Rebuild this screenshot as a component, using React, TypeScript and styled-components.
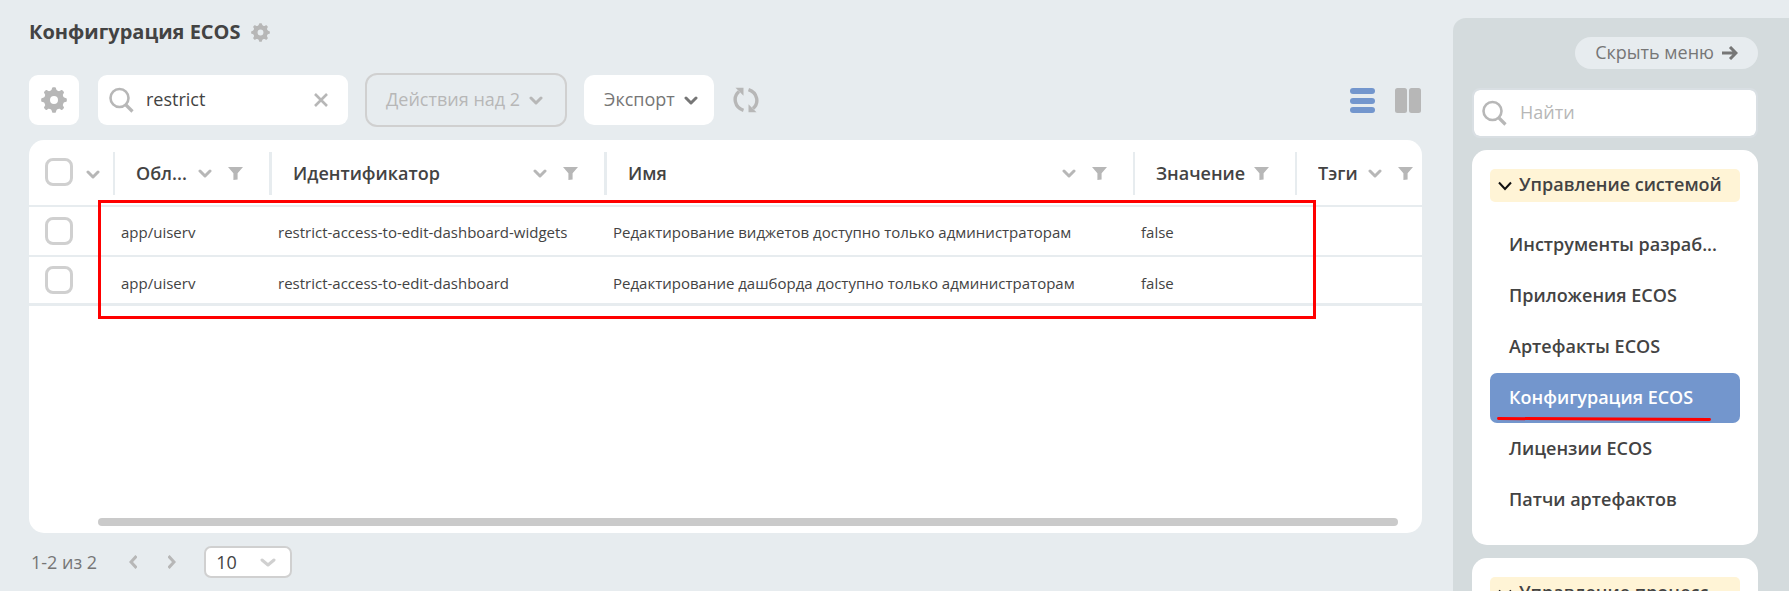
import React, { useState } from 'react';
import styled, { createGlobalStyle, css } from 'styled-components';

const color = {
  page: '#e7ecef',
  side: '#d4dbdd',
  text: '#434343',
  muted: '#767676',
  icon: '#b7b7b7',
  border: '#d0d0d0',
  accent: '#7396cd',
  group: '#fff4d6',
  mark: '#ff0000',
};

const GlobalStyle = createGlobalStyle`
  *, *::before, *::after { box-sizing: border-box; }
  body {
    margin: 0;
    background: ${color.page};
    color: ${color.text};
    font-family: 'Open Sans', 'Noto Sans', sans-serif;
    font-size: 18px;
    line-height: 24px;
  }
  button, input, select { font: inherit; color: inherit; }
  button { padding: 0; border: 0; background: none; cursor: pointer; }
  svg { display: block; flex: none; }
`;

const Page = styled.div`
  display: flex;
  height: 100vh;
  overflow: hidden;
`;

const Main = styled.main`
  display: flex;
  flex: 1;
  flex-direction: column;
  min-width: 0;
  padding: 18px 31px 13px 29px;
`;

const TitleRow = styled.header`
  display: flex;
  align-items: center;
  gap: 10px;
  height: 28px;
  margin-bottom: 27px;
`;

const Title = styled.h1`
  margin: 0;
  font-size: 20px;
  font-weight: 700;
  line-height: 28px;
`;

const Toolbar = styled.div`
  display: flex;
  align-items: center;
  gap: 17px;
  height: 54px;
  margin-bottom: 13px;
`;

const IconButton = styled.button<{ $tone?: string }>`
  display: flex;
  align-items: center;
  justify-content: center;
  color: ${(p) => p.$tone ?? color.icon};
`;

const SquareButton = styled(IconButton)`
  width: 50px;
  height: 50px;
  margin-right: 2px;
  border-radius: 9px;
  background: #fff;
`;

const SearchBox = styled.label<{ $side?: boolean }>`
  display: flex;
  align-items: center;
  height: 50px;
  color: ${color.icon};
  background: #fff;
  ${(p) =>
    p.$side
      ? css`
          gap: 13px;
          margin: 19px 0 12px;
          padding: 0 8px;
          border: 2px solid #d9dfe3;
          border-radius: 8px;
          background-clip: padding-box;
        `
      : css`
          gap: 12px;
          width: 250px;
          padding: 0 20px 0 11px;
          border-radius: 9px;
        `}
`;

const SearchInput = styled.input`
  flex: 1;
  min-width: 0;
  height: 28px;
  padding: 0 0 2px;
  border: 0;
  outline: 0;
  background: none;
  color: ${color.text};
  &::placeholder { color: ${color.icon}; opacity: 1; }
`;

const MenuButton = styled.button<{ $outlined?: boolean }>`
  display: flex;
  align-items: center;
  gap: 9px;
  height: 50px;
  padding: 0 16px 0 20px;
  border-radius: 10px;
  background: #fff;
  color: ${color.muted};
  white-space: nowrap;
  ${(p) =>
    p.$outlined &&
    css`
      height: 54px;
      padding: 0 22px 0 19px;
      border: 2px solid ${color.border};
      border-radius: 12px;
      background: none;
      color: ${color.icon};
    `}
`;

const MenuButtonLabel = styled.span`
  padding-bottom: 2px;
`;

const RefreshButton = styled(IconButton)`
  margin-left: 2px;
`;

const Views = styled.div`
  display: flex;
  gap: 20px;
  margin: 0 1px 0 auto;
`;

const Card = styled.section`
  position: relative;
  display: flex;
  flex: 1;
  flex-direction: column;
  min-height: 0;
  overflow: hidden;
  border-radius: 15px;
  background: #fff;
`;

const Grid = styled.table`
  width: 100%;
  table-layout: fixed;
  border-collapse: separate;
  border-spacing: 0;
`;

const Col = styled.col<{ $w?: number }>`
  width: ${(p) => (p.$w ? `${p.$w}px` : 'auto')};
`;

const HeadCell = styled.th`
  height: 67px;
  padding: 2px 0 0;
  border-bottom: 2px solid ${color.page};
  text-align: left;
  font-weight: 600;
`;

const HeadBox = styled.div<{ $line: number; $select?: boolean }>`
  display: flex;
  align-items: center;
  height: 43px;
  padding: 0 ${(p) => (p.$line ? 26 : 9)}px 0 21px;
  border-right: ${(p) => p.$line}px solid ${color.page};
  ${(p) =>
    p.$select &&
    css`
      gap: 13px;
      padding: 0 13px 4px 16px;
      color: ${color.icon};
    `}
`;

const HeadLabel = styled.span`
  flex: 1;
  overflow: hidden;
  padding-bottom: 2px;
  white-space: nowrap;
`;

const HeadTools = styled.span`
  display: flex;
  align-items: center;
  gap: 16px;
`;

const Cell = styled.td<{ $last?: boolean }>`
  height: ${(p) => (p.$last ? 49 : 50)}px;
  padding: ${(p) => (p.$last ? 6 : 2)}px 6px 0;
  border-bottom: ${(p) => (p.$last ? 3 : 2)}px solid ${color.page};
  font-size: 15px;
  line-height: 20px;
  white-space: nowrap;
`;

const SelectCell = styled(Cell)`
  padding: 0 16px;
`;

const Check = styled.input.attrs({ type: 'checkbox' })`
  display: block;
  flex: none;
  width: 28px;
  height: 28px;
  margin: 0;
  appearance: none;
  border: 3px solid ${color.border};
  border-radius: 8px;
  background: #fff;
  &:checked { background: ${color.accent}; }
`;

const SelectChevron = styled.span`
  padding-top: 6px;
`;

const ScrollTrack = styled.div`
  margin: auto 24px 7px 69px;
`;

const ScrollThumb = styled.div`
  height: 8px;
  border-radius: 4px;
  background: #cacaca;
`;

const MarkFrame = styled.div`
  position: absolute;
  top: 60px;
  right: 106px;
  left: 69px;
  height: 119px;
  border: 3px solid ${color.mark};
  pointer-events: none;
`;

const Pager = styled.footer`
  display: flex;
  align-items: center;
  height: 32px;
  margin-top: 13px;
  padding-left: 2px;
  color: ${color.muted};
`;

const PagerArrows = styled.div`
  display: flex;
  gap: 31px;
  margin: 0 28px 0 32px;
`;

const SizePicker = styled.label`
  position: relative;
  display: block;
  color: ${color.border};
  svg {
    position: absolute;
    top: 12px;
    right: 16px;
    pointer-events: none;
  }
`;

const SizeSelect = styled.select`
  display: block;
  width: 88px;
  height: 32px;
  padding: 0 10px;
  appearance: none;
  border: 2px solid ${color.border};
  border-radius: 7px;
  background: #fff;
  color: ${color.text};
`;

const Side = styled.aside`
  flex: none;
  width: 336px;
  margin-top: 18px;
  padding: 19px 31px 0 19px;
  border-radius: 13px 0 0 0;
  background: ${color.side};
`;

const HideButton = styled.button`
  display: flex;
  align-items: center;
  gap: 8px;
  height: 32px;
  margin-left: auto;
  padding: 0 20px;
  border-radius: 16px;
  background: ${color.page};
  color: ${color.muted};
`;

const Group = styled.nav`
  margin-bottom: 13px;
  padding: 19px 18px 20px;
  border-radius: 15px;
  background: #fff;
`;

const GroupHead = styled.button`
  display: flex;
  align-items: center;
  gap: 7px;
  width: 100%;
  height: 33px;
  padding: 0 8px;
  border-radius: 5px;
  background: ${color.group};
  font-weight: 600;
  text-align: left;
`;

const GroupLabel = styled.span`
  flex: 1;
  overflow: hidden;
  padding-bottom: 4px;
  white-space: nowrap;
`;

const GroupList = styled.ul`
  display: grid;
  gap: 1px;
  margin: 18px 0 0;
  padding: 0;
  list-style: none;
`;

const GroupLink = styled.a<{ $active?: boolean }>`
  position: relative;
  display: block;
  height: 50px;
  padding: 0 19px;
  overflow: hidden;
  border-radius: 7px;
  background: ${(p) => (p.$active ? color.accent : 'none')};
  color: ${(p) => (p.$active ? '#fff' : color.text)};
  font-weight: 600;
  line-height: 48px;
  text-decoration: none;
  white-space: nowrap;
`;

const Underline = styled.svg`
  position: absolute;
  bottom: 0;
  left: 7px;
`;

const Chevron = ({ width = 14, height = 9, stroke = 3 }) => (
  <svg width={width} height={height} viewBox={`0 0 ${width} ${height}`} fill="none" stroke="currentColor" strokeWidth={stroke} strokeLinecap="round" strokeLinejoin="round">
    <path d={`M2 2 L${width / 2} ${height - 2} L${width - 2} 2`} />
  </svg>
);

const SideChevron = () => (
  <svg width="14" height="10" viewBox="0 0 14 10" fill="none" stroke="#111" strokeWidth="2">
    <path d="M1 1.5 L7 8 L13 1.5" />
  </svg>
);

const PageArrow = ({ back = false }) => (
  <svg width="8" height="14" viewBox="0 0 8 14" fill="none" stroke="currentColor" strokeWidth="3">
    <path d={back ? 'M7.5 1 L2 7 L7.5 13' : 'M0.5 1 L6 7 L0.5 13'} />
  </svg>
);

const Gear = ({ size = 26 }) => (
  <svg width={size} height={size} viewBox="0 0 26 26">
    <circle cx="13" cy="13" r="7" fill="none" stroke="currentColor" strokeWidth="6" />
    {[0, 45, 90, 135, 180, 225, 270, 315].map((angle) => (
      <path key={angle} d="M8.6 5 Q10.8 3.8 11.2 0.8 Q11.4 0.2 12 0.2 H14 Q14.6 0.2 14.8 0.8 Q15.2 3.8 17.4 5 Z" fill="currentColor" transform={`rotate(${angle} 13 13)`} />
    ))}
  </svg>
);

const Magnifier = () => (
  <svg width="25" height="26" viewBox="0 0 25 26" fill="none" stroke="currentColor">
    <circle cx="10.5" cy="11" r="9" strokeWidth="2.6" />
    <path d="M17 18 L23.5 24.5" strokeWidth="3.2" />
  </svg>
);

const Cross = () => (
  <svg width="14" height="14" viewBox="0 0 14 14" fill="none" stroke="currentColor" strokeWidth="2.6">
    <path d="M1 1 L13 13 M13 1 L1 13" />
  </svg>
);

const Funnel = () => (
  <svg width="15" height="13" viewBox="0 0 15 13" fill="currentColor">
    <path d="M0 0 H15 L9.6 6.2 V12.4 L5.4 13 V6.2 Z" />
  </svg>
);

const Refresh = () => (
  <svg width="26" height="26" viewBox="0 0 26 26">
    <g fill="none" stroke="currentColor" strokeWidth="3.4">
      <path d="M10.5 23.4 C1.5 20.5 -0.5 10 6 4.5" />
      <path d="M15.5 2.6 C24.5 5.5 26.5 16 20 21.5" />
    </g>
    <path d="M2.5 0.8 H10.5 V8.8 Z M23.5 25.2 H15.5 V17.2 Z" fill="currentColor" />
  </svg>
);

const ListIcon = () => (
  <svg width="25" height="25" viewBox="0 0 25 25" fill="currentColor">
    <rect width="25" height="6" rx="3" />
    <rect y="10" width="25" height="6" rx="3" />
    <rect y="19" width="25" height="6" rx="3" />
  </svg>
);

const ColumnsIcon = () => (
  <svg width="26" height="25" viewBox="0 0 26 25" fill="currentColor">
    <rect width="12" height="25" rx="2.5" />
    <rect x="14" width="12" height="25" rx="2.5" />
  </svg>
);

const ArrowRight = () => (
  <svg width="16" height="14" viewBox="0 0 16 14" fill="none" stroke="currentColor" strokeWidth="3">
    <path d="M0 7 H14 M8 1 L14 7 L8 13" />
  </svg>
);

const columns = [
  { label: 'Обл...', width: 157, line: 3, sort: true },
  { label: 'Идентификатор', width: 335, line: 3, sort: true },
  { label: 'Имя', line: 2, sort: true },
  { label: 'Значение', width: 162, line: 2, sort: false },
  { label: 'Тэги', width: 125, line: 0, sort: true },
];

const rows = [
  ['app/uiserv', 'restrict-access-to-edit-dashboard-widgets', 'Редактирование виджетов доступно только администраторам', 'false', ''],
  ['app/uiserv', 'restrict-access-to-edit-dashboard', 'Редактирование дашборда доступно только администраторам', 'false', ''],
];

const menu = ['Инструменты разраб...', 'Приложения ECOS', 'Артефакты ECOS', 'Конфигурация ECOS', 'Лицензии ECOS', 'Патчи артефактов'];

export default function App() {
  const [query, setQuery] = useState('restrict');
  const [active, setActive] = useState('Конфигурация ECOS');

  return (
    <Page>
      <GlobalStyle />
      <Main>
        <TitleRow>
          <Title>Конфигурация ECOS</Title>
          <IconButton aria-label="Настройки страницы"><Gear size={19} /></IconButton>
        </TitleRow>

        <Toolbar>
          <SquareButton aria-label="Настройки журнала"><Gear /></SquareButton>
          <SearchBox>
            <Magnifier />
            <SearchInput aria-label="Поиск" value={query} onChange={(e) => setQuery(e.target.value)} />
            <IconButton aria-label="Очистить" onClick={() => setQuery('')}><Cross /></IconButton>
          </SearchBox>
          <MenuButton $outlined disabled><MenuButtonLabel>Действия над 2</MenuButtonLabel><Chevron /></MenuButton>
          <MenuButton><MenuButtonLabel>Экспорт</MenuButtonLabel><Chevron /></MenuButton>
          <RefreshButton aria-label="Обновить"><Refresh /></RefreshButton>
          <Views>
            <IconButton aria-label="Список" $tone={color.accent}><ListIcon /></IconButton>
            <IconButton aria-label="Колонки"><ColumnsIcon /></IconButton>
          </Views>
        </Toolbar>

        <Card>
          <Grid>
            <colgroup>
              <Col $w={86} />
              {columns.map((c) => <Col key={c.label} $w={c.width} />)}
            </colgroup>
            <thead>
              <tr>
                <HeadCell>
                  <HeadBox $line={2} $select>
                    <Check aria-label="Выбрать все" />
                    <SelectChevron><Chevron /></SelectChevron>
                  </HeadBox>
                </HeadCell>
                {columns.map((c) => (
                  <HeadCell key={c.label}>
                    <HeadBox $line={c.line}>
                      <HeadLabel>{c.label}</HeadLabel>
                      <HeadTools>
                        {c.sort && <IconButton aria-label="Сортировать"><Chevron /></IconButton>}
                        <IconButton aria-label="Фильтр"><Funnel /></IconButton>
                      </HeadTools>
                    </HeadBox>
                  </HeadCell>
                ))}
              </tr>
            </thead>
            <tbody>
              {rows.map((row, i) => {
                const last = i === rows.length - 1;
                return (
                  <tr key={row[1]}>
                    <SelectCell $last={last}><Check aria-label={row[1]} /></SelectCell>
                    {row.map((value, j) => (
                      <Cell key={j} $last={last}>{value}</Cell>
                    ))}
                  </tr>
                );
              })}
            </tbody>
          </Grid>
          <ScrollTrack><ScrollThumb /></ScrollTrack>
          <MarkFrame />
        </Card>

        <Pager>
          <span>1-2 из 2</span>
          <PagerArrows>
            <IconButton aria-label="Назад"><PageArrow back /></IconButton>
            <IconButton aria-label="Вперёд"><PageArrow /></IconButton>
          </PagerArrows>
          <SizePicker>
            <SizeSelect aria-label="Записей на странице" defaultValue="10">
              <option>10</option>
              <option>20</option>
              <option>50</option>
            </SizeSelect>
            <Chevron width={16} />
          </SizePicker>
        </Pager>
      </Main>

      <Side>
        <HideButton><MenuButtonLabel>Скрыть меню</MenuButtonLabel><ArrowRight /></HideButton>
        <SearchBox $side>
          <Magnifier />
          <SearchInput aria-label="Найти" placeholder="Найти" />
        </SearchBox>
        <Group>
          <GroupHead><SideChevron /><GroupLabel>Управление системой</GroupLabel></GroupHead>
          <GroupList>
            {menu.map((item) => (
              <li key={item}>
                <GroupLink href="#" $active={item === active} onClick={() => setActive(item)}>
                  {item}
                  {item === active && (
                    <Underline width="214" height="8" viewBox="0 0 214 8">
                      <path d="M1.5 3.5 L212.5 4.5" stroke={color.mark} strokeWidth="3" strokeLinecap="round" />
                    </Underline>
                  )}
                </GroupLink>
              </li>
            ))}
          </GroupList>
        </Group>
        <Group>
          <GroupHead><SideChevron /><GroupLabel>Управление процесс...</GroupLabel></GroupHead>
        </Group>
      </Side>
    </Page>
  );
}
